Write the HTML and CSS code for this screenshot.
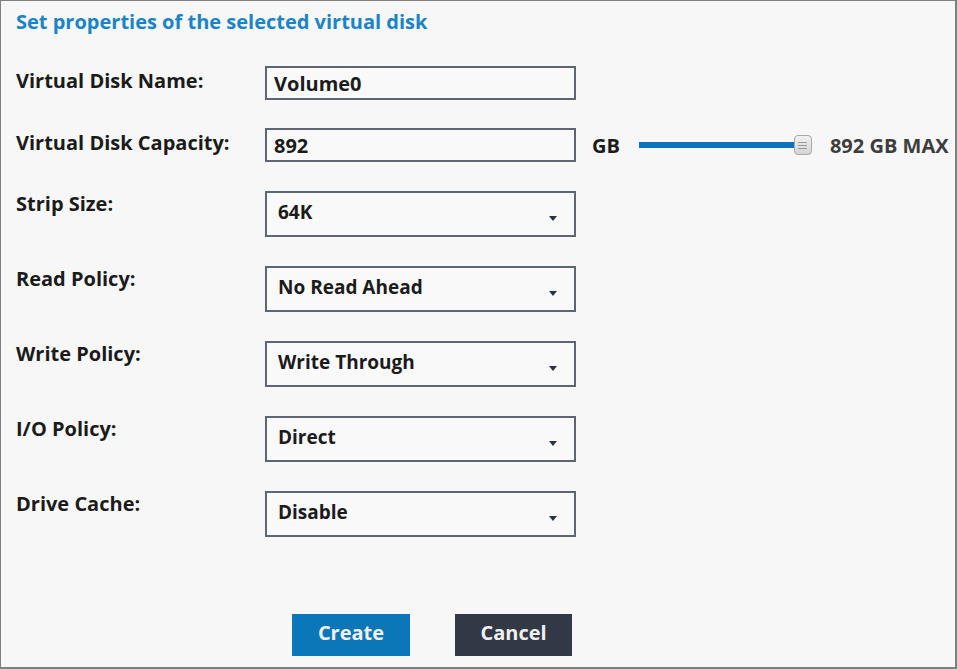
FILE: index.html
```html
<!DOCTYPE html>
<html>
<head>
<meta charset="utf-8">
<link rel="stylesheet" href="styles.css">
</head>
<body>
<div class="page">
  <h1 class="title">Set properties of the selected virtual disk</h1>
  <div class="form">
    <div class="row row-input">
      <div class="label">Virtual Disk Name:</div>
      <div class="control"><div class="textbox">Volume0</div></div>
    </div>
    <div class="row row-input row-cap">
      <div class="label">Virtual Disk Capacity:</div>
      <div class="control cap">
        <div class="textbox">892</div>
        <span class="unit">GB</span>
        <div class="slider"><div class="track"></div><div class="thumb"><i></i><i></i><i></i></div></div>
        <span class="max">892 GB MAX</span>
      </div>
    </div>
    <div class="row row-select first-select">
      <div class="label">Strip Size:</div>
      <div class="control"><div class="select"><span>64K</span><b class="arrow"></b></div></div>
    </div>
    <div class="row row-select">
      <div class="label">Read Policy:</div>
      <div class="control"><div class="select"><span>No Read Ahead</span><b class="arrow"></b></div></div>
    </div>
    <div class="row row-select">
      <div class="label">Write Policy:</div>
      <div class="control"><div class="select"><span>Write Through</span><b class="arrow"></b></div></div>
    </div>
    <div class="row row-select">
      <div class="label">I/O Policy:</div>
      <div class="control"><div class="select"><span>Direct</span><b class="arrow"></b></div></div>
    </div>
    <div class="row row-select">
      <div class="label">Drive Cache:</div>
      <div class="control"><div class="select"><span>Disable</span><b class="arrow"></b></div></div>
    </div>
  </div>
  <div class="buttons">
    <button class="btn btn-primary">Create</button>
    <button class="btn btn-dark">Cancel</button>
  </div>
</div>
</body>
</html>
```
FILE: styles.css
```css
* { box-sizing: border-box; }
html, body { margin: 0; padding: 0; }
body {
  background: #f7f7f7;
  font-family: "Open Sans", "DejaVu Sans", sans-serif;
  color: #1b1b1b;
}
.page {
  width: 957px;
  height: 669px;
  border: 1px solid #808080;
  border-right-width: 2px;
  border-bottom-width: 2px;
  background: #f7f7f7;
  padding: 0 0 0 15px;
  position: relative;
}
.title {
  margin: 0;
  padding-top: 9px;
  font-size: 20px;
  line-height: 24px;
  font-weight: 700;
  color: #1a84c6;
}
.form { margin-top: 32px; }
.row { display: flex; align-items: flex-start; }
.label {
  width: 249px;
  font-size: 20px;
  font-weight: 700;
}
.row-input .label { line-height: 30px; }
.row-cap { margin-top: 28px; }
.first-select { margin-top: 29px; }
.row-select + .row-select { margin-top: 29px; }
.row-select .label { line-height: 26px; }
.textbox {
  width: 311px;
  height: 34px;
  border: 2px solid #5f6673;
  background: #f9f9f9;
  padding: 0 7px;
  font-size: 20px;
  font-weight: 700;
  line-height: 32px;
  padding-top: 0;
}
.cap { display: flex; align-items: center; }
.unit { margin-left: 16px; font-size: 20px; font-weight: 700; }
.slider {
  position: relative;
  width: 173px;
  height: 20px;
  margin-left: 19px;
}
.track {
  position: absolute;
  left: 0; right: 10px; top: 7px;
  height: 6px;
  background: #0c74b6;
}
.thumb {
  position: absolute;
  right: 0; top: 0;
  width: 18px; height: 20px;
  border: 1px solid #a9a9a9;
  border-radius: 4px;
  background: linear-gradient(#f2f2f2, #d4d4d4);
  display: flex; flex-direction: column; justify-content: center; align-items: center; gap: 2px;
}
.thumb i { display: block; width: 9px; height: 1px; background: #9a9a9a; }
.max { margin-left: 18px; font-size: 20px; font-weight: 700; color: #3d3d3d; }
.select {
  width: 311px;
  height: 46px;
  border: 2px solid #5f6673;
  background: #f9f9f9;
  display: flex; align-items: center;
  padding: 0 17px 0 11px;
  font-size: 19px; font-weight: 700;
}
.select span { flex: 1; margin-top: -5px; }
.arrow {
  width: 0; height: 0;
  border-left: 4px solid transparent;
  border-right: 4px solid transparent;
  border-top: 5px solid #2a3142;
  margin-top: 8px;
}
.buttons {
  display: flex; gap: 45px;
  margin-top: 77px;
  padding-left: 276px;
}
.btn {
  width: 118px; height: 42px;
  border: 0;
  font-family: inherit;
  font-size: 20px;
  font-weight: 700;
  color: #f0f0f0;
  padding: 0 0 5px 0;
}
.btn-primary { background: #0b76b8; }
.btn-dark { background: #323846; width: 117px; }
```
